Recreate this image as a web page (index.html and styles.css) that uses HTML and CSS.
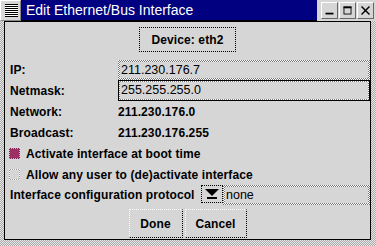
FILE: index.html
```html
<!DOCTYPE html>
<html lang="en">
<head>
    <meta charset="UTF-8">
    <title>Edit Ethernet/Bus Interface</title>
    <link rel="stylesheet" href="styles.css">
</head>
<body>
    <div class="window">
        <div class="titlebar">
            <div class="menu-btn"><span class="menu-lines"></span></div>
            <div class="title">Edit Ethernet/Bus Interface</div>
            <div class="tb-btns">
                <div class="tb-btn">
                    <svg width="17" height="17" viewBox="0 0 17 17"><rect x="4" y="11" width="9" height="2" fill="#000"/></svg>
                </div>
                <div class="tb-btn">
                    <svg width="17" height="17" viewBox="0 0 17 17"><rect x="4.5" y="4.5" width="8" height="8" fill="none" stroke="#000"/><rect x="4" y="4" width="9" height="2" fill="#000"/></svg>
                </div>
                <div class="tb-btn">
                    <svg width="17" height="17" viewBox="0 0 17 17"><path d="M4 4 L13 13 M13 4 L4 13" stroke="#000" stroke-width="1.6"/></svg>
                </div>
            </div>
        </div>

        <div class="frame">
            <div class="device-row">
                <div class="btn device">Device: eth2</div>
            </div>

            <div class="form">
                <div class="label">IP:</div>
                <div class="entry"><span>211.230.176.7</span></div>
                <div class="label">Netmask:</div>
                <div class="entry focus"><span>255.255.255.0</span></div>
                <div class="label">Network:</div>
                <div class="value">211.230.176.0</div>
                <div class="label">Broadcast:</div>
                <div class="value">211.230.176.255</div>
            </div>

            <div class="check-row"><span class="check on"></span>Activate interface at boot time</div>
            <div class="check-row"><span class="check"></span>Allow any user to (de)activate interface</div>

            <div class="proto-row">
                <div class="proto-label">Interface configuration protocol</div>
                <div class="option">
                    <svg width="16" height="12" viewBox="0 0 16 12"><path d="M1 1 H15 L8 8 Z" fill="#000"/><rect x="3" y="9" width="10" height="2" fill="#000"/></svg>
                </div>
                <div class="entry proto-entry"><span>none</span></div>
            </div>

            <div class="actions">
                <div class="btn push">Done</div>
                <div class="btn push cancel">Cancel</div>
            </div>
        </div>
    </div>
</body>
</html>
```

FILE: styles.css
```css
* {
    margin: 0;
    padding: 0;
    box-sizing: border-box;
}

body {
    font-family: "Liberation Sans", Arial, sans-serif;
    font-size: 12px;
    background: #d6d6d6;
    color: #000;
}

.window {
    width: 376px;
    height: 246px;
    display: flex;
    flex-direction: column;
    background: repeating-conic-gradient(#a8a8a8 0 25%, #e8e8e8 0 50%) 0 0 / 2px 2px;
}

/* title bar */
.titlebar {
    height: 21px;
    display: flex;
    background: #d6d6d6;
}

.menu-btn {
    width: 21px;
    height: 21px;
    border-top: 1px solid #fff;
    border-left: 1px solid #fff;
    border-right: 1px solid #888;
    border-bottom: 1px solid #888;
    padding: 3px 3px 0 4px;
}

.menu-lines {
    display: block;
    width: 13px;
    height: 13px;
    background: repeating-linear-gradient(#000 0 1px, #fff 1px 2px);
}

.title {
    flex: 1;
    background: #000080;
    color: #fff;
    font-size: 14px;
    padding: 2px 0 0 5px;
    border-bottom: 1px solid #000;
}

.tb-btns {
    display: flex;
    gap: 1px;
    padding: 2px 2px 0 4px;
}

.tb-btn {
    width: 17px;
    height: 17px;
    background: #d6d6d6;
    border-top: 1px solid #fff;
    border-left: 1px solid #fff;
    border-right: 1px solid #666;
    border-bottom: 1px solid #666;
    display: flex;
    align-items: center;
    justify-content: center;
}

/* main frame */
.frame {
    flex: 1;
    margin: 0 5px 6px 4px;
    border: 1px solid #000;
    background: #d6d6d6;
    padding: 5px 0 0 5px;
    font-weight: bold;
    letter-spacing: 0.1px;
}

.device-row {
    display: flex;
    justify-content: center;
    padding-right: 5px;
}

.btn {
    border: 1px dotted #000;
    display: flex;
    align-items: center;
    justify-content: center;
    background: #d6d6d6;
}

.device {
    width: 97px;
    height: 25px;
}

.form {
    margin-top: 7px;
    display: grid;
    grid-template-columns: 108px 1fr;
    grid-auto-rows: 21px;
    align-items: center;
}

.entry {
    height: 20px;
    padding: 2px;
    background: repeating-conic-gradient(#777 0 25%, #fff 0 50%) 0 0 / 2px 2px;
    font-weight: normal;
    font-size: 12.5px;
    letter-spacing: 0;
}

.entry span {
    display: block;
    height: 100%;
    background: #d6d6d6;
    padding-left: 1px;
    line-height: 16px;
}

.entry.focus {
    height: 21px;
    border: 1px solid #000;
    padding: 1px;
}

.check-row {
    height: 21px;
    display: flex;
    align-items: center;
}

.check {
    width: 11px;
    height: 11px;
    margin: 0 6px 0 -1px;
    padding: 1px;
    background: repeating-conic-gradient(#999 0 25%, #fff 0 50%) 0 0 / 2px 2px;
}

.check::after {
    content: "";
    display: block;
    height: 100%;
    background: #d6d6d6;
}

.check.on {
    background: repeating-conic-gradient(#7a2050 0 25%, #d8b0c4 0 50%) 0 0 / 2px 2px;
}

.check.on::after {
    background: #9c2f63;
}

.proto-row {
    height: 20px;
    display: flex;
    align-items: flex-start;
}

.proto-label {
    width: 191px;
    line-height: 20px;
}

.option {
    width: 22px;
    height: 18px;
    border: 1px dotted #000;
    display: flex;
    align-items: center;
    justify-content: center;
}

.proto-entry {
    flex: 1;
}

.actions {
    margin-top: 4px;
    display: flex;
    justify-content: center;
    gap: 2px;
    padding-right: 5px;
}

.push {
    width: 54px;
    height: 29px;
    border-color: #fff #000 #000 #fff;
}

.push.cancel {
    width: 62px;
}
```
